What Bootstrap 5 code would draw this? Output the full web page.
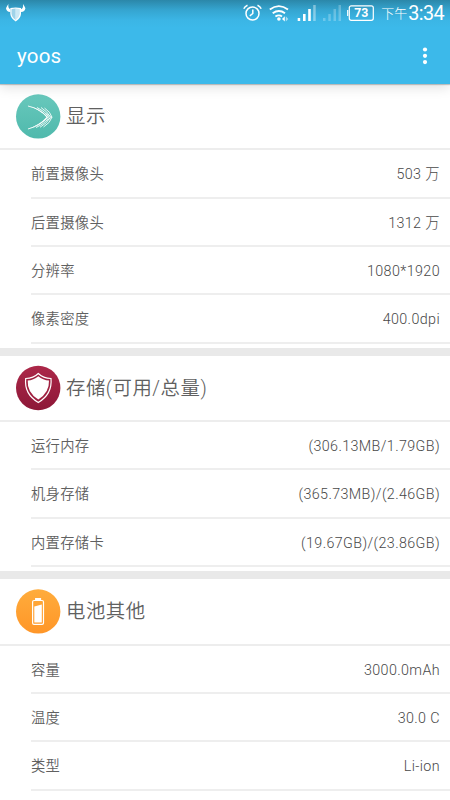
<!DOCTYPE html>
<html lang="zh-CN">
<head>
<meta charset="utf-8">
<meta name="viewport" content="width=device-width, initial-scale=1">
<title>yoos</title>
<link href="https://cdn.jsdelivr.net/npm/bootstrap@5.3.0/dist/css/bootstrap.min.css" rel="stylesheet">
<style>
body{font-family:Roboto,"Noto Sans CJK SC",sans-serif;font-weight:300;color:#484848;background:#fff;height:800px;overflow:hidden}
.top-area{height:84px;background:linear-gradient(#2b87a9 0,#35a5d0 10px,#3bb5e5 20px,#3cb9ea 28px);color:#fff;box-shadow:0 1px 1px #0003,0 3px 12px #0002;position:relative}
.status-line{height:28px;padding:0 6px 0 6px}
.status-line svg{display:block;flex:none}
.ampm{font-size:13px;line-height:28px;margin-left:7px}
.clock{font-size:19.8px;line-height:26px;font-weight:400;letter-spacing:-.6px;margin-left:1px}
.title-line{height:56px;padding:0 20px 0 17px}
.app-name{font-size:20.5px;font-weight:400;letter-spacing:.2px;line-height:56px}
.group-head{height:66.3px;padding-left:15px;border-bottom:2px solid #ededed}
.group-head h2{font-size:19.4px;font-weight:350;color:#606060;letter-spacing:.52px;margin:2px 0 0 5px;line-height:28px}
.entry{height:48.33px;margin-left:31px;padding-right:10px;border-bottom:2px solid #eee;font-size:14.3px;letter-spacing:.39px;line-height:49px}
.entry span:first-child{font-weight:350;letter-spacing:.3px;color:#606060}
.group-block{padding-bottom:4.2px;border-bottom:8px solid #e9e9e9}
.group-block:last-child{border:0}
</style>
<script src="https://cdn.jsdelivr.net/npm/bootstrap@5.3.0/dist/js/bootstrap.bundle.min.js"></script>
</head>
<body>
<header class="top-area">
  <div class="status-line d-flex align-items-center">
    <svg width="20" height="20" viewBox="0 0 20 20" fill="#fff"><path d="M2.400 0Q.9 2.200 0 4.200Q.4 7.600 4.300 8V5.200Q1.800 4.200 2.400 0ZM17 0Q18.600 2.200 19.400 4.200Q19 7.600 15 8V5.200Q17.600 4.200 17 0Z"/><path d="M4.300 4Q9.700 2.800 15 4V10Q14.700 14.200 9.700 17.500Q4.700 14.200 4.300 10Z"/><path d="M5.500 5.200Q7.500 4.500 9.700 4.500V16Q5.600 13.300 5.500 9.500Z" fill="#9fd3e9"/><path d="M9.700 4.500Q12 4.500 13.800 5.200V10Q13.500 13.200 9.700 16Z" fill="#cbe9f5"/></svg>
    <div class="d-flex align-items-center ms-auto">
      <svg width="132" height="28" viewBox="243 0 132 28" fill="none" stroke="#fff"><circle cx="253.500" cy="13.500" r="6.500" stroke-width="1.500"/><path d="M253.800 9.500V13.500L250.800 15.800M244.800 8.800Q245.800 6.500 248.500 5.300M262.200 8.800Q261.200 6.500 258.500 5.300" stroke-width="1.500"/>
      <path d="M270.800 9.500Q279.800 2.800 289 9.500M273.700 13.200Q279.900 8.800 286 13.200M276.400 16.500Q279.900 14.200 283 16.500" stroke-width="1.900"/><circle cx="279.900" cy="19" r="1.800" fill="#fff" stroke="none"/><path d="M285.800 16.200L283 19L285.800 21.500Z" fill="#fff" stroke="none"/><path d="M286.800 16.200L289.300 19L286.800 21.500Z" fill="#fff" opacity=".55" stroke="none"/>
      <g fill="#fff" stroke="none"><path d="M298.700 18h2.500v3h-2.500zM304 14h2.600v7h-2.600zM309.200 9h2.600v12h-2.600z"/><path d="M314.200 5h2.500v16h-2.500z" opacity=".4"/><path d="M324 18h2.500v3H324zM329.300 14h2.500v7h-2.500zM334.500 9h2.500v12h-2.500zM339.500 5h2.500v16h-2.500z" opacity=".25"/></g>
      <rect x="350.300" y="5.800" width="24" height="14.500" rx="2" stroke-width="1.200"/><path d="M348.700 10v6" stroke-width="1.200"/><text x="362.300" y="17.300" text-anchor="middle" fill="#fff" stroke="none" font-family="Roboto, sans-serif" font-size="12.300" font-weight="700">73</text></svg>
      <span class="ampm">下午</span><span class="clock">3:34</span>
    </div>
  </div>
  <div class="title-line d-flex align-items-center">
    <span class="app-name">yoos</span>
    <svg class="ms-auto" width="10" height="20" fill="#fff"><circle cx="5" cy="3.500" r="2.100"/><circle cx="5" cy="9.800" r="2.100"/><circle cx="5" cy="16.100" r="2.100"/></svg>
  </div>
</header>
<main>
  <section class="group-block">
    <div class="group-head d-flex align-items-center">
      <svg width="46" height="46" viewBox="15 93 46 46"><defs><linearGradient id="teal" x2="0" y2="1"><stop stop-color="#68c8bc"/><stop offset="1" stop-color="#4fb9ac"/></linearGradient></defs><circle cx="38.200" cy="116.400" r="22.200" fill="url(#teal)"/><g fill="none" stroke="#fff" stroke-width=".85"><path d="M28 106Q41 109 47.500 117.200Q41 125.500 28 129"/><path d="M37 107.500Q45 111 49 117.200Q45 123.500 36 127.500"/><path d="M41 107.500Q47.500 111.500 50.500 117.200Q47.500 123 40 127.300"/><path d="M44.500 108Q50.500 112 52 117.200Q50.500 122.500 43.500 127"/><path d="M46 113.500L52 117.200L46 121" stroke-width=".6"/></g><path d="M27 105.500Q41 109 48 117.200Q41 125.500 27 129.300Q40 124.500 46.500 117.200Q40 109.500 27 105.500Z" fill="#fff"/></svg>
      <h2>显示</h2>
    </div>
    <div class="entry d-flex justify-content-between"><span>前置摄像头</span><span>503 万</span></div>
    <div class="entry d-flex justify-content-between"><span>后置摄像头</span><span>1312 万</span></div>
    <div class="entry d-flex justify-content-between"><span>分辨率</span><span>1080*1920</span></div>
    <div class="entry d-flex justify-content-between"><span>像素密度</span><span>400.0dpi</span></div>
  </section>
  <section class="group-block">
    <div class="group-head d-flex align-items-center">
      <svg width="46" height="46" viewBox="15 365 46 46"><defs><linearGradient id="wine" x2="0" y2="1"><stop stop-color="#ac2849"/><stop offset="1" stop-color="#8d1737"/></linearGradient></defs><circle cx="38.200" cy="388" r="22.200" fill="url(#wine)"/><path d="M38.300 373.500Q43 378.300 51 378.500Q52.500 394 38.300 402.500Q24 394 25.700 378.500Q33.500 378.300 38.300 373.500Z" fill="#a02040" stroke="#fff" stroke-width="1.200"/><path d="M38.300 376.200Q43 380.300 49 380.500Q49.500 392.500 38.300 399.500Q27 392.500 27.700 380.500Q33.500 380.300 38.300 376.200Z" fill="#fff"/></svg>
      <h2>存储(可用/总量)</h2>
    </div>
    <div class="entry d-flex justify-content-between"><span>运行内存</span><span>(306.13MB/1.79GB)</span></div>
    <div class="entry d-flex justify-content-between"><span>机身存储</span><span>(365.73MB)/(2.46GB)</span></div>
    <div class="entry d-flex justify-content-between"><span>内置存储卡</span><span>(19.67GB)/(23.86GB)</span></div>
  </section>
  <section class="group-block">
    <div class="group-head d-flex align-items-center">
      <svg width="46" height="46" viewBox="15 588 46 46"><defs><linearGradient id="amber" x2="0" y2="1"><stop stop-color="#ffac3c"/><stop offset="1" stop-color="#ff9628"/></linearGradient></defs><circle cx="38.200" cy="611.400" r="22.200" fill="url(#amber)"/><path d="M35.700 600.500V598.500H40.500V600.500H42Q43.500 600.500 43.500 602V623Q43.500 624.300 42 624.300H34Q32.600 624.300 32.600 623V602Q32.600 600.500 34 600.500Z" fill="none" stroke="#fff" stroke-width="1.200"/><path d="M35.500 598h5v3h-5z" fill="#fff"/><path d="M34.300 606.500L41.800 604.500V622.500H34.300Z" fill="#fff"/></svg>
      <h2>电池其他</h2>
    </div>
    <div class="entry d-flex justify-content-between"><span>容量</span><span>3000.0mAh</span></div>
    <div class="entry d-flex justify-content-between"><span>温度</span><span>30.0 C</span></div>
    <div class="entry d-flex justify-content-between"><span>类型</span><span>Li-ion</span></div>
  </section>
</main>
</body>
</html>
